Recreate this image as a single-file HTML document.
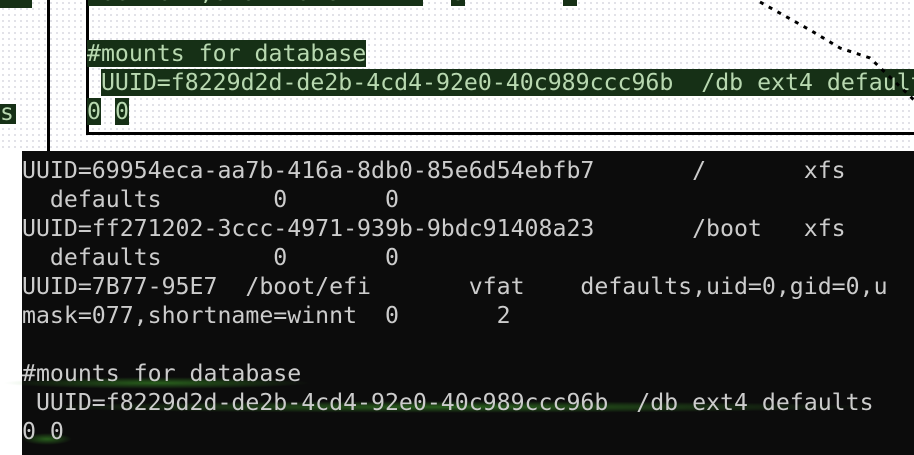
<!DOCTYPE html>
<html><head><style>
body{margin:0;width:914px;height:455px;overflow:hidden;background:#fff;position:relative;font-family:"DejaVu Sans Mono","Liberation Mono",monospace;}
.t{position:absolute;font-size:23.2px;line-height:29px;white-space:pre;letter-spacing:0}
.hl span{background:#163016;color:#b8d8b0}
#term{position:absolute;left:22px;top:151px;width:892px;height:304px;background:#0c0c0c}
#term .t{color:#cccccc;left:0}
.g{position:absolute;height:12px;background:radial-gradient(ellipse,rgba(60,150,40,.6),rgba(60,150,40,0) 70%)}
</style></head><body>
<div style="position:absolute;left:0;top:0;width:914px;height:151px;background-image:radial-gradient(#d8d8e0 1px,transparent 1px);background-size:6px 6px"></div>
<div style="position:absolute;left:47px;top:0;width:3px;height:151px;background:#000"></div>
<div style="position:absolute;left:86px;top:0;width:3px;height:134px;background:#000"></div>
<div style="position:absolute;left:86px;top:132px;width:828px;height:3px;background:#000"></div>
<div style="position:absolute;left:0;top:0;width:32px;height:8px;background:#163016"></div>
<div style="position:absolute;left:0;top:104px;width:16px;height:20px;background:#163016;color:#b8d8b0;font-size:23px;line-height:18px">s</div>
<div class="t hl" style="left:88px;top:-22px"><span>mask=077,shortname=winnt</span>  <span>0</span>       <span>2</span></div>
<div class="t hl" style="left:87px;top:39px"><span>#mounts for database</span></div>
<div class="t hl" style="left:87px;top:68px"> <span>UUID=f8229d2d-de2b-4cd4-92e0-40c989ccc96b  /db ext4 defaults</span></div>
<div class="t hl" style="left:87px;top:97px"><span>0</span> <span>0</span></div>
<svg style="position:absolute;left:700px;top:0" width="214" height="110"><path d="M60 2 L110 30 L140 48 L170 58 L214 100" stroke="#000" stroke-width="3" stroke-dasharray="4 6" fill="none"/></svg>
<div id="term">
<div class="g" style="left:-20px;top:226px;width:310px"></div>
<div class="g" style="left:0;top:250px;width:860px"></div>
<div class="g" style="left:0;top:282px;width:50px"></div>
<div class="t" style="top:5px">UUID=69954eca-aa7b-416a-8db0-85e6d54ebfb7       /       xfs
  defaults        0       0
UUID=ff271202-3ccc-4971-939b-9bdc91408a23       /boot   xfs
  defaults        0       0
UUID=7B77-95E7  /boot/efi       vfat    defaults,uid=0,gid=0,u
mask=077,shortname=winnt  0       2

#mounts for database
 UUID=f8229d2d-de2b-4cd4-92e0-40c989ccc96b  /db ext4 defaults
0 0</div>
</div>
</body></html>
